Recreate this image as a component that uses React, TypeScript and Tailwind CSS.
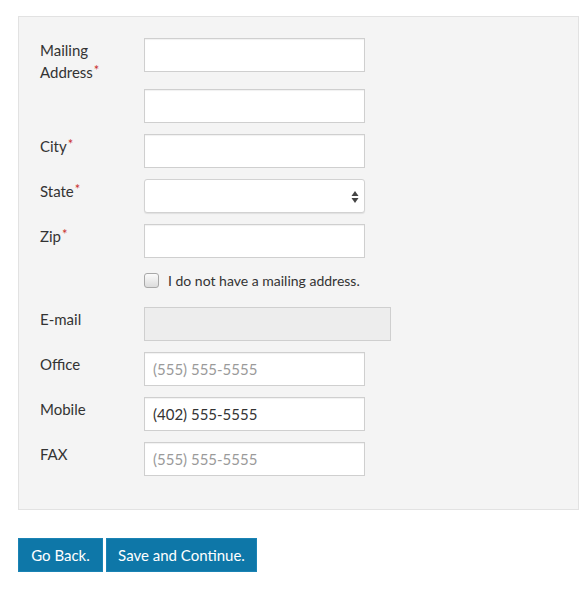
import React from "react";

const inputCls =
  "block h-[34px] w-[221px] border border-[#cfcfcf] bg-white px-2 text-[15px] text-[#333] shadow-[inset_0_1px_1px_rgba(0,0,0,0.06)] outline-none placeholder:text-[#9a9a9a]";

function Req() {
  return <span className="relative -top-[3px] ml-[1px] text-[13px] text-[#c9302c]">*</span>;
}

function Row({
  label,
  children,
  className = "",
}: {
  label?: React.ReactNode;
  children: React.ReactNode;
  className?: string;
}) {
  return (
    <div className={"flex items-start " + className}>
      <div className="h-[20px] w-[104px] shrink-0 pt-[1px] text-[15px] leading-[22px] text-[#333]">
        {label}
      </div>
      <div>{children}</div>
    </div>
  );
}

export default function App() {
  return (
    <div
      className="min-h-screen bg-white pl-[18px] pt-[16px]"
      style={{ fontFamily: "Lato, 'Open Sans', sans-serif" }}
    >
      <div className="w-[561px] border border-[#e2e2e2] bg-[#f4f4f4] pb-[33px] pl-[21px] pt-[21px]">
        <Row label={<>Mailing<br />Address<Req /></>}>
          <input className={inputCls} />
        </Row>
        <Row className="mt-[17px]">
          <input className={inputCls} />
        </Row>
        <Row className="mt-[11px]" label={<>City<Req /></>}>
          <input className={inputCls} />
        </Row>
        <Row className="mt-[11px]" label={<>State<Req /></>}>
          <div className="relative h-[34px] w-[221px] rounded-[3px] border border-[#d2d2d2] bg-white shadow-[0_1px_1px_rgba(0,0,0,0.08)]">
            <svg
              className="absolute right-[5px] top-[10px]"
              width="8"
              height="14"
              viewBox="0 0 8 14"
            >
              <path d="M4 1 L7.5 6 L0.5 6 Z" fill="#444" />
              <path d="M4 13 L7.5 8 L0.5 8 Z" fill="#444" />
            </svg>
          </div>
        </Row>
        <Row className="mt-[11px]" label={<>Zip<Req /></>}>
          <input className={inputCls} />
        </Row>
        <Row className="mt-[12px]">
          <label className="flex h-[21px] items-center gap-[9px] text-[14px] text-[#333]">
            <span className="block h-[15px] w-[15px] rounded-[3px] border border-[#a8a8a8] bg-gradient-to-b from-[#fbfbfb] to-[#dcdcdc]" />
            I do not have a mailing address.
          </label>
        </Row>
        <Row className="mt-[16px]" label="E-mail">
          <input
            disabled
            className="block h-[34px] w-[247px] border border-[#cfcfcf] bg-[#ededed] px-2 outline-none"
          />
        </Row>
        <Row className="mt-[11px]" label="Office">
          <input className={inputCls} placeholder="(555) 555-5555" />
        </Row>
        <Row className="mt-[11px]" label="Mobile">
          <input className={inputCls} defaultValue="(402) 555-5555" />
        </Row>
        <Row className="mt-[11px]" label="FAX">
          <input className={inputCls} placeholder="(555) 555-5555" />
        </Row>
      </div>

      <div className="mt-[28px] flex gap-[3px]">
        <button className="h-[34px] w-[85px] border border-[#1a83b4] bg-[#0e77a8] text-[15px] text-white">
          Go Back.
        </button>
        <button className="h-[34px] w-[151px] border border-[#1a83b4] bg-[#0e77a8] text-[15px] text-white">
          Save and Continue.
        </button>
      </div>
    </div>
  );
}
